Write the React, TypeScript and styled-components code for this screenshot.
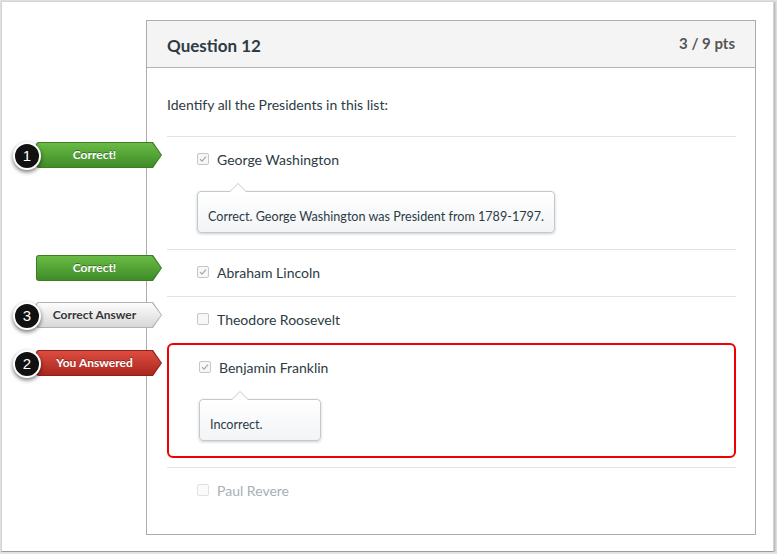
import React from 'react';
import styled, { createGlobalStyle, css } from 'styled-components';

const GlobalStyle = createGlobalStyle`
  html, body {
    margin: 0;
    padding: 0;
    background: #e2e2e2;
  }
  body {
    font-family: Lato, "Open Sans", sans-serif;
    color: #2d3b45;
  }
`;

type MarkKind = 'correct' | 'answer' | 'wrong';

type Mark = { kind: MarkKind; text: string; badge?: number };

type Answer = {
  id: string;
  label: string;
  checked: boolean;
  muted?: boolean;
  flagged?: boolean;
  comment?: string;
  mark?: Mark;
};

const answers: Answer[] = [
  {
    id: 'gw',
    label: 'George Washington',
    checked: true,
    comment: 'Correct. George Washington was President from 1789-1797.',
    mark: { kind: 'correct', text: 'Correct!', badge: 1 },
  },
  { id: 'al', label: 'Abraham Lincoln', checked: true, mark: { kind: 'correct', text: 'Correct!' } },
  {
    id: 'tr',
    label: 'Theodore Roosevelt',
    checked: false,
    mark: { kind: 'answer', text: 'Correct Answer', badge: 3 },
  },
  {
    id: 'bf',
    label: 'Benjamin Franklin',
    checked: true,
    flagged: true,
    comment: 'Incorrect.',
    mark: { kind: 'wrong', text: 'You Answered', badge: 2 },
  },
  { id: 'pr', label: 'Paul Revere', checked: false, muted: true },
];

const palette: Record<MarkKind, { edge: string; top: string; bottom: string; ink: string; shadow: string }> = {
  correct: { edge: '#3b7c25', top: '#69bb45', bottom: '#3f8c28', ink: '#fff', shadow: 'rgba(0,0,0,0.35)' },
  answer: { edge: '#b3b3b3', top: '#fdfdfd', bottom: '#d8d8d8', ink: '#333', shadow: 'rgba(255,255,255,0.8)' },
  wrong: { edge: '#8e2119', top: '#de4c40', bottom: '#a9281e', ink: '#fff', shadow: 'rgba(0,0,0,0.35)' },
};

const Frame = styled.div`
  box-sizing: border-box;
  width: 773px;
  height: 551px;
  margin: 1px 0 0 1px;
  padding: 18px 0 0 144px;
  background: #fff;
  border: 1px solid #d4d4d4;
  border-bottom-color: #9c9c9c;
  box-shadow: 1px 1px 2px rgba(0, 0, 0, 0.25);
`;

const Card = styled.section`
  box-sizing: border-box;
  width: 610px;
  height: 515px;
  border: 1px solid #acacac;
  background: #fff;
`;

const Header = styled.header`
  box-sizing: border-box;
  height: 47px;
  padding: 15px 20px 0;
  display: flex;
  justify-content: space-between;
  align-items: flex-start;
  background: #f4f4f4;
  border-bottom: 1px solid #b3b3b3;
`;

const Title = styled.h2`
  margin: 0;
  font-size: 17px;
  line-height: 20px;
  font-weight: 700;
  color: #2d3b45;
`;

const Points = styled.div`
  margin-top: -3px;
  font-size: 15px;
  line-height: 20px;
  font-weight: 700;
  color: #555;
`;

const Body = styled.div`
  padding: 27px 19px 0 20px;
`;

const Prompt = styled.p`
  margin: 0 0 21px;
  font-size: 14px;
  line-height: 20px;
`;

const AnswerBlock = styled.div<{ $flagged?: boolean }>`
  padding: 13px 0 13px 30px;
  border-top: 1px solid #e0e2e4;

  ${p =>
    p.$flagged &&
    css`
      border: 2px solid #f20000;
      border-radius: 6px;
      padding-bottom: 12px;
      margin-bottom: 9px;
    `}
`;

const Row = styled.div<{ $muted?: boolean }>`
  position: relative;
  height: 20px;
  display: flex;
  align-items: center;
  gap: 8px;
  font-size: 14px;
  line-height: 20px;
  color: ${p => (p.$muted ? '#a7afb5' : '#2d3b45')};
`;

const Box = styled.span<{ $muted?: boolean }>`
  box-sizing: border-box;
  width: 12px;
  height: 12px;
  margin-top: -2px;
  display: inline-flex;
  align-items: center;
  justify-content: center;
  border: 1px solid ${p => (p.$muted ? '#dfe2e4' : '#c4c7ca')};
  border-radius: 2px;
  background: ${p => (p.$muted ? '#fafafa' : '#f7f7f7')};
`;

const Bubble = styled.div`
  position: relative;
  box-sizing: border-box;
  width: fit-content;
  min-width: 122px;
  margin: 21px 0 3px;
  padding: 16px 10px 6px;
  font-size: 12.6px;
  line-height: 18px;
  color: #2d3b45;
  background: linear-gradient(#ffffff, #f2f4f6);
  border: 1px solid #c3c9ce;
  border-radius: 4px;
  box-shadow: 0 1px 3px rgba(0, 0, 0, 0.2);

  &::before,
  &::after {
    content: '';
    position: absolute;
    left: 31px;
    width: 0;
    height: 0;
    border: 9px solid transparent;
    border-top: 0;
  }
  &::before {
    top: -9px;
    border-bottom-color: #c3c9ce;
  }
  &::after {
    top: -8px;
    border-bottom-color: #fff;
  }
`;

const Marker = styled.div<{ $shift: number }>`
  position: absolute;
  top: -8px;
  left: ${p => -161 - p.$shift}px;
  width: 126px;
  height: 26px;
`;

const bannerShape = 'polygon(0 0, calc(100% - 9px) 0, 100% 50%, calc(100% - 9px) 100%, 0 100%)';

const BannerEdge = styled.div<{ $kind: MarkKind }>`
  position: absolute;
  inset: 0;
  border-radius: 3px 0 0 3px;
  clip-path: ${bannerShape};
  background: ${p => palette[p.$kind].edge};
`;

const BannerFill = styled.div<{ $kind: MarkKind }>`
  position: absolute;
  inset: 1px;
  border-radius: 2px 0 0 2px;
  clip-path: ${bannerShape};
  background: linear-gradient(${p => palette[p.$kind].top}, ${p => palette[p.$kind].bottom});
`;

const BannerText = styled.span<{ $kind: MarkKind }>`
  position: absolute;
  left: 0;
  right: 9px;
  top: 0;
  height: 26px;
  display: flex;
  align-items: center;
  justify-content: center;
  font-family: Lato, "Liberation Sans", sans-serif;
  font-size: 12px;
  font-weight: 700;
  color: ${p => palette[p.$kind].ink};
  text-shadow: 0 -1px 0 ${p => palette[p.$kind].shadow};
`;

const Badge = styled.span`
  position: absolute;
  left: -23px;
  top: 0;
  box-sizing: border-box;
  width: 28px;
  height: 28px;
  display: flex;
  align-items: center;
  justify-content: center;
  border-radius: 50%;
  border: 2px solid #fff;
  background: #111;
  box-shadow: 0 2px 4px rgba(0, 0, 0, 0.55);
  font-family: "Liberation Sans", Arial, sans-serif;
  font-size: 15px;
  color: #fff;
`;

function Check() {
  return (
    <svg width="8" height="8" viewBox="0 0 8 8">
      <path d="M1 4.2 L3 6.2 L7 1.6" fill="none" stroke="#a3a7aa" strokeWidth="1.2" />
    </svg>
  );
}

function MarkLabel({ mark, shift }: { mark: Mark; shift: number }) {
  return (
    <Marker $shift={shift}>
      <BannerEdge $kind={mark.kind} />
      <BannerFill $kind={mark.kind} />
      <BannerText $kind={mark.kind}>{mark.text}</BannerText>
      {mark.badge !== undefined && <Badge>{mark.badge}</Badge>}
    </Marker>
  );
}

function AnswerItem({ answer }: { answer: Answer }) {
  return (
    <AnswerBlock $flagged={answer.flagged}>
      <Row $muted={answer.muted}>
        {answer.mark && <MarkLabel mark={answer.mark} shift={answer.flagged ? 2 : 0} />}
        <Box $muted={answer.muted}>{answer.checked && <Check />}</Box>
        <span>{answer.label}</span>
      </Row>
      {answer.comment && <Bubble>{answer.comment}</Bubble>}
    </AnswerBlock>
  );
}

export default function App() {
  return (
    <>
      <GlobalStyle />
      <Frame>
        <Card>
          <Header>
            <Title>Question 12</Title>
            <Points>3 / 9 pts</Points>
          </Header>
          <Body>
            <Prompt>Identify all the Presidents in this list:</Prompt>
            {answers.map(a => (
              <AnswerItem key={a.id} answer={a} />
            ))}
          </Body>
        </Card>
      </Frame>
    </>
  );
}
